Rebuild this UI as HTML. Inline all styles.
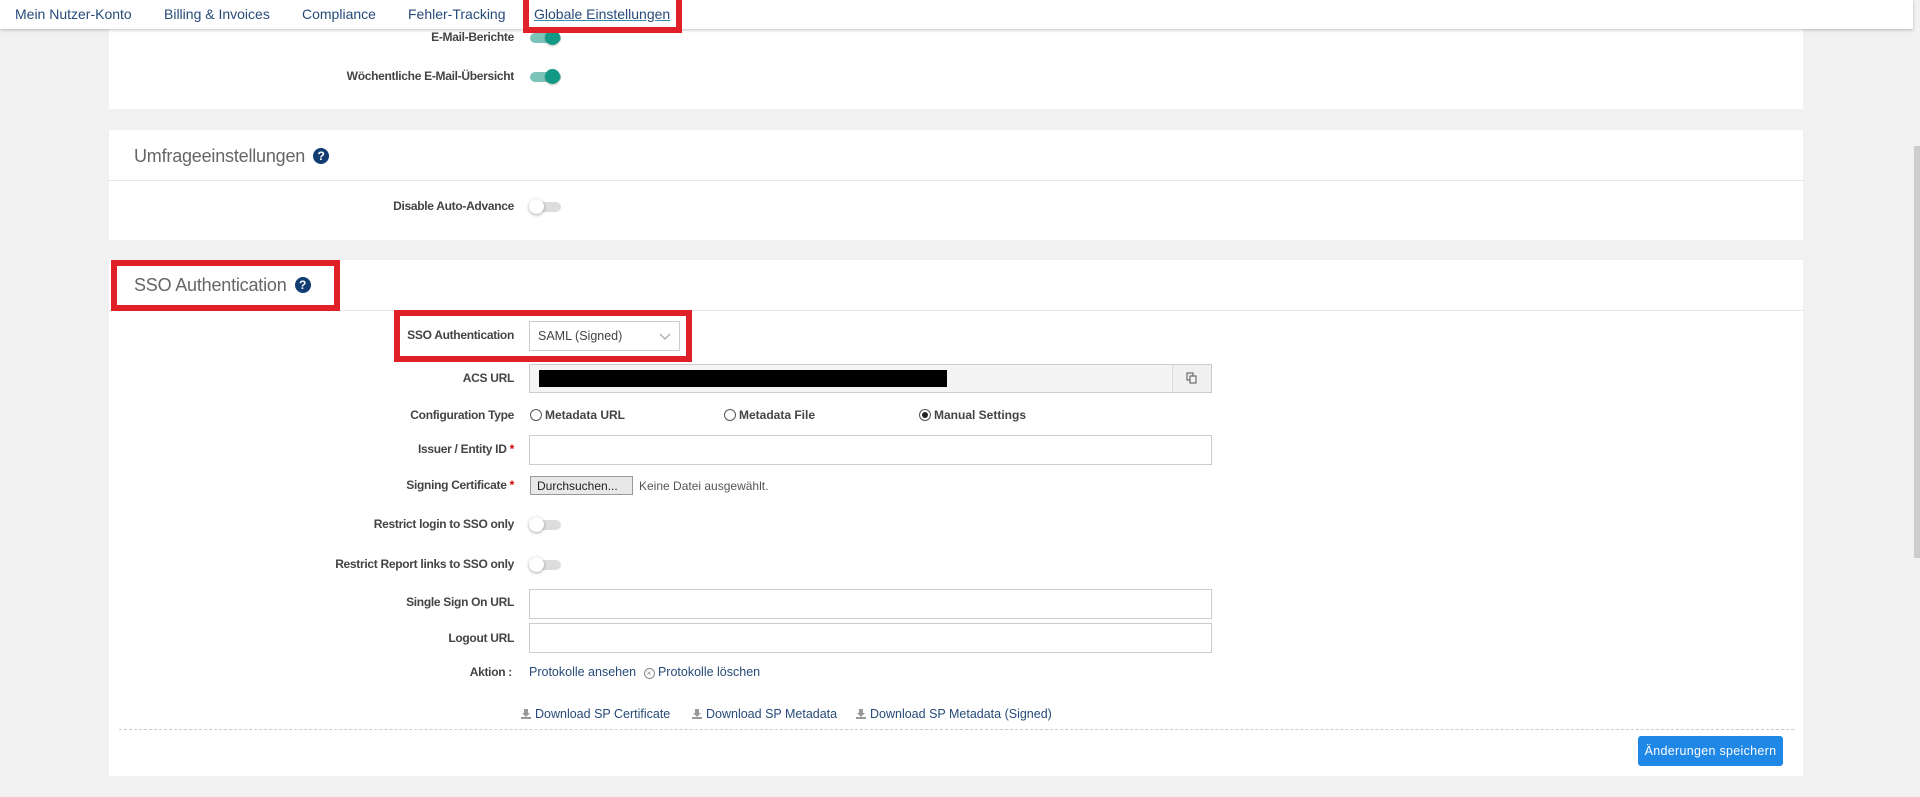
<!DOCTYPE html>
<html><head><meta charset="utf-8"><style>
*{margin:0;padding:0;box-sizing:border-box}
body{width:1920px;height:797px;background:#f1f1f1;font-family:"Liberation Sans",sans-serif;position:relative;overflow:hidden}
.a{position:absolute}
.nav{left:0;top:0;width:1913px;height:29px;background:#fff;box-shadow:0 1px 3px rgba(0,0,0,.25);z-index:5}
.nav span{position:absolute;top:6px;font-size:14px;color:#274b79;white-space:nowrap}
.card{background:#fff;left:109px;width:1694px}
.lbl{font-size:12px;font-weight:bold;color:#444;text-align:right;width:400px;left:114px;letter-spacing:-.3px;white-space:nowrap}
.tog{width:31px;height:10px;border-radius:5px;background:#ddd}
.tog i{position:absolute;left:-1px;top:-3px;width:15px;height:15px;border-radius:50%;background:#fff;box-shadow:0 1px 3px rgba(0,0,0,.35)}
.tog.on{background:#7cc3b9}.tog.on i{left:15px;background:#139a87;box-shadow:0 1px 2px rgba(0,0,0,.25)}
.inp{border:1px solid #ccc;background:#fff;left:529px;width:683px}
.hd{font-size:18px;color:#666;font-weight:normal;letter-spacing:-.2px}
.q{display:inline-block;width:16px;height:16px;border-radius:50%;background:#123d73;color:#fff;font-size:12px;font-weight:bold;text-align:center;line-height:16px;vertical-align:2px;margin-left:8px}
.red{border:6px solid #e01f26}
.lnk{font-size:12.5px;color:#274b79;white-space:nowrap}
.rad{font-size:12px;font-weight:bold;color:#444;white-space:nowrap}
.rad b{display:inline-block;width:12px;height:12px;border:1px solid #555;border-radius:50%;vertical-align:-2px;margin-right:3px;position:relative}
.rad b.s::after{content:"";position:absolute;left:2px;top:2px;width:6px;height:6px;border-radius:50%;background:#222}
.dl{display:inline-block;width:10px;height:10px;vertical-align:-1px;margin-right:4px}
</style></head><body>
<div class="a nav">
<span style="left:15px">Mein Nutzer-Konto</span>
<span style="left:164px">Billing &amp; Invoices</span>
<span style="left:302px">Compliance</span>
<span style="left:408px">Fehler-Tracking</span>
<span style="left:534px;text-decoration:underline;text-decoration-color:#3a8fb0">Globale Einstellungen</span>
<div class="a red" style="left:523px;top:0;width:159px;height:33px;border-top:0"></div>
</div>
<div class="a" style="left:1913px;top:0;width:7px;height:797px;background:#f1f1f1"></div>
<div class="a" style="left:1914px;top:146px;width:6px;height:412px;background:#cdcdcd"></div>

<div class="a card" style="top:0;height:109px"></div>
<div class="a lbl" style="top:30px">E-Mail-Berichte</div>
<div class="a tog on" style="left:530px;top:33px"><i></i></div>
<div class="a lbl" style="top:69px">Wöchentliche E-Mail-Übersicht</div>
<div class="a tog on" style="left:530px;top:72px"><i></i></div>

<div class="a card" style="top:130px;height:110px"></div>
<div class="a hd" style="left:134px;top:146px">Umfrageeinstellungen<span class="q">?</span></div>
<div class="a" style="left:109px;top:180px;width:1694px;height:1px;background:#e8e8e8"></div>
<div class="a lbl" style="top:199px">Disable Auto-Advance</div>
<div class="a tog" style="left:530px;top:202px"><i></i></div>

<div class="a card" style="top:260px;height:516px"></div>
<div class="a" style="left:109px;top:310px;width:1694px;height:1px;background:#e8e8e8"></div>
<div class="a hd" style="left:134px;top:275px">SSO Authentication<span class="q">?</span></div>
<div class="a red" style="left:111px;top:260px;width:229px;height:51px"></div>

<div class="a red" style="left:394px;top:310px;width:298px;height:52px"></div>
<div class="a lbl" style="top:328px">SSO Authentication</div>
<div class="a" style="left:529px;top:321px;width:151px;height:30px;border:1px solid #ccc;font-size:12.5px;color:#444;padding:7px 8px">SAML (Signed)
<svg class="a" style="right:8px;top:11px" width="12" height="8"><path d="M1 1l5 5 5-5" fill="none" stroke="#999" stroke-width="1"/></svg></div>

<div class="a lbl" style="top:371px">ACS URL</div>
<div class="a inp" style="top:364px;height:29px;background:#f4f4f4"></div>
<div class="a" style="left:539px;top:370px;width:408px;height:17px;background:#000"></div>
<div class="a" style="left:1172px;top:364px;width:40px;height:29px;border:1px solid #ccc;border-left:1px solid #ddd;background:#f0f0f0"></div>
<svg class="a" style="left:1186px;top:372px" width="12" height="12"><rect x="1" y="1" width="6" height="7" fill="none" stroke="#555"/><rect x="4" y="4" width="6" height="7" fill="#f0f0f0" stroke="#555"/></svg>

<div class="a lbl" style="top:408px">Configuration Type</div>
<div class="a rad" style="left:530px;top:408px"><b></b>Metadata URL</div>
<div class="a rad" style="left:724px;top:408px"><b></b>Metadata File</div>
<div class="a rad" style="left:919px;top:408px"><b class="s"></b>Manual Settings</div>

<div class="a lbl" style="top:442px">Issuer / Entity ID <span style="color:#c00">*</span></div>
<div class="a inp" style="top:435px;height:30px"></div>

<div class="a lbl" style="top:478px">Signing Certificate <span style="color:#c00">*</span></div>
<div class="a" style="left:530px;top:476px;width:103px;height:19px;border:1px solid #999;background:#e8e8e8;font-size:12px;color:#222;padding:2px 0 0 6px">Durchsuchen...</div>
<div class="a" style="left:639px;top:479px;font-size:12px;color:#555">Keine Datei ausgewählt.</div>

<div class="a lbl" style="top:517px">Restrict login to SSO only</div>
<div class="a tog" style="left:530px;top:520px"><i></i></div>
<div class="a lbl" style="top:557px">Restrict Report links to SSO only</div>
<div class="a tog" style="left:530px;top:560px"><i></i></div>

<div class="a lbl" style="top:595px">Single Sign On URL</div>
<div class="a inp" style="top:589px;height:30px"></div>
<div class="a lbl" style="top:631px">Logout URL</div>
<div class="a inp" style="top:623px;height:30px"></div>

<div class="a lbl" style="top:665px;width:398px">Aktion :</div>
<div class="a lnk" style="left:529px;top:665px">Protokolle ansehen <span style="display:inline-block;width:11px;height:11px;border:1px solid #888;border-radius:50%;font-size:8px;line-height:9px;text-align:center;color:#888;margin-left:4px;vertical-align:0">×</span> Protokolle löschen</div>

<div class="a lnk" style="left:521px;top:707px"><svg class="dl" viewBox="0 0 10 10"><path d="M3 0h4v4h2L5 8 1 4h2z M0 8h10v2H0z" fill="#999"/></svg>Download SP Certificate</div>
<div class="a lnk" style="left:692px;top:707px"><svg class="dl" viewBox="0 0 10 10"><path d="M3 0h4v4h2L5 8 1 4h2z M0 8h10v2H0z" fill="#999"/></svg>Download SP Metadata</div>
<div class="a lnk" style="left:856px;top:707px"><svg class="dl" viewBox="0 0 10 10"><path d="M3 0h4v4h2L5 8 1 4h2z M0 8h10v2H0z" fill="#999"/></svg>Download SP Metadata (Signed)</div>

<div class="a" style="left:119px;top:729px;width:1675px;border-top:1px dashed #ccc"></div>
<div class="a" style="left:1638px;top:736px;width:145px;height:30px;background:#1f87e5;border-radius:3px;color:#fff;font-size:12.5px;text-align:center;line-height:30px;letter-spacing:.3px">Änderungen speichern</div>
</body></html>
